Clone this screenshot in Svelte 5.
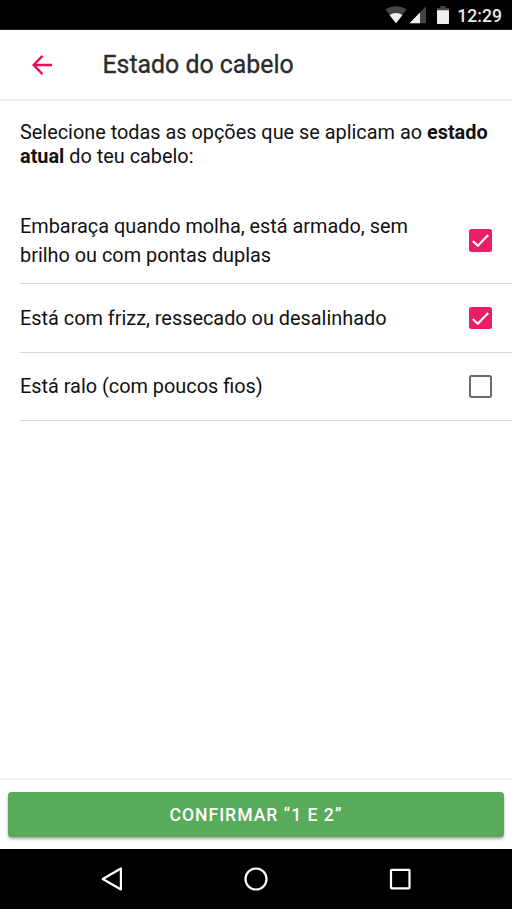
<script>
    let options = $state([
        { text: 'Embaraça quando molha, está armado, sem brilho ou com pontas duplas', checked: true },
        { text: 'Está com frizz, ressecado ou desalinhado', checked: true },
        { text: 'Está ralo (com poucos fios)', checked: false },
    ]);

    let selected = $derived(
        options
            .map((option, i) => (option.checked ? i + 1 : 0))
            .filter((n) => n > 0)
            .join(' e ')
    );
</script>

<div class="screen">
    <div class="status">
        <svg class="wifi" width="22" height="18" viewBox="0 0 22 18">
            <path d="M11 17.2 .4 3.6C3.4 1.4 7 .2 11 .2s7.600 1.200 10.600 3.400z" fill="#444" />
            <path d="M11 17.2 4.500 8.900C6.400 7.600 8.600 6.900 11 6.900s4.600.7 6.500 2z" fill="#eee" />
        </svg>
        <svg class="signal" width="18" height="18" viewBox="0 0 18 18">
            <path d="M.5 17.200h16.500V.2z" fill="#444" />
            <path d="M.5 17.200h10.500V6.400z" fill="#eee" />
        </svg>
        <svg class="battery" width="12" height="18" viewBox="0 0 12 18">
            <path d="M3.400 0h5v2H12v3H0V2h3.400z" fill="#444" />
            <path d="M0 4.200h12v13a.8.8 0 0 1-.8.8H.8a.8.8 0 0 1-.8-.8z" fill="#eee" />
        </svg>
        <span class="time">12:29</span>
    </div>

    <header>
        <button class="back" aria-label="Voltar">
            <svg width="20" height="20" viewBox="0 0 20 20" fill="none" stroke="#ec0a5d" stroke-width="2.300">
                <path d="M20 10H2M10.500 .9 1.600 10l8.900 9.100" />
            </svg>
        </button>
        <h1>Estado do cabelo</h1>
    </header>

    <main>
        <p>Selecione todas as opções que se aplicam ao <b>estado atual</b> do teu cabelo:</p>

        <div class="list">
            {#each options as option}
                <label>
                    <span class="text">{option.text}</span>
                    <input type="checkbox" bind:checked={option.checked} />
                    <span class="box" class:checked={option.checked}>
                        {#if option.checked}
                            <svg viewBox="0 0 22 22" fill="none" stroke="#fff" stroke-width="2">
                                <path d="m3.700 11.600 4.900 4.700L18.700 5.900" />
                            </svg>
                        {/if}
                    </span>
                </label>
            {/each}
        </div>
    </main>

    <footer>
        <button class="confirm">Confirmar “{selected}”</button>
    </footer>

    <nav>
        <svg width="24" height="24" viewBox="0 0 24 24">
            <path d="M20.900 1.500v21L2.800 12z" />
        </svg>
        <svg width="24" height="24" viewBox="0 0 24 24">
            <circle cx="12" cy="12" r="10.500" />
        </svg>
        <svg width="24" height="24" viewBox="0 0 24 24">
            <rect x="3" y="2.800" width="18.500" height="18.500" rx=".5" />
        </svg>
    </nav>
</div>

<style>
    :global(body) {
        background: #fff;
    }

    .screen {
        display: flex;
        flex-direction: column;
        height: 100vh;
        font-family: Roboto, sans-serif;
        color: #111;
    }

    .status {
        display: flex;
        align-items: center;
        justify-content: flex-end;
        box-sizing: border-box;
        height: 30px;
        padding: 1px 10px 0 0;
        background: #000;
        border-bottom: 1px solid #222;
    }

    .signal {
        margin-left: 2px;
    }

    .battery {
        margin: 0 8px 0 10px;
    }

    .time {
        padding-top: 1px;
        font-size: 17.600px;
        font-weight: 500;
        line-height: 28px;
        color: #e8e8e8;
    }

    header {
        display: flex;
        align-items: center;
        box-sizing: border-box;
        height: 71px;
        border-bottom: 2px solid #efefef;
    }

    button {
        padding: 0;
        border: 0;
        font-family: inherit;
    }

    .back {
        display: flex;
        margin: 1px 50px 0 32px;
        background: none;
    }

    h1 {
        margin: 0 0 0 .5px;
        font-size: 24.850px;
        font-weight: 400;
        color: #2c2c2c;
        -webkit-text-stroke: .35px #2c2c2c;
    }

    main {
        flex: 1;
    }

    p {
        margin: 20px 20px 30px;
        font-size: 19.860px;
        line-height: 24px;
    }

    .list {
        padding-left: 20px;
    }

    label {
        display: flex;
        align-items: center;
        box-sizing: border-box;
        min-height: 68.400px;
        padding: 11px 20px 11px 0;
        border-bottom: 1px solid #dadada;
    }

    label:first-child {
        padding-bottom: 12.700px;
    }

    .text {
        flex: 1;
        padding: 1.500px 45px 0 0;
        font-size: 19.860px;
        line-height: 29.500px;
    }

    input {
        position: absolute;
        opacity: 0;
    }

    .box {
        box-sizing: border-box;
        width: 22.600px;
        height: 22.600px;
        border: 2px solid #6b6b6b;
        border-radius: 2.500px;
    }

    .box.checked {
        border: 0;
        background: #e91e63;
    }

    .box svg {
        display: block;
    }

    footer {
        box-sizing: border-box;
        height: 71px;
        padding: 12px 8px;
        border-top: 2px solid #eee;
    }

    .confirm {
        display: block;
        width: 100%;
        height: 45px;
        border-radius: 4px;
        background: #58ab5b;
        box-shadow: 0 2px 3px rgba(0, 0, 0, .35);
        font-size: 17.600px;
        font-weight: 500;
        letter-spacing: .950px;
        text-transform: uppercase;
        color: #fff;
    }

    nav {
        display: flex;
        align-items: center;
        justify-content: center;
        gap: 120px;
        height: 60px;
        background: #000;
    }

    nav svg {
        fill: none;
        stroke: #fff;
        stroke-width: 2.200;
        stroke-linejoin: round;
    }
</style>
